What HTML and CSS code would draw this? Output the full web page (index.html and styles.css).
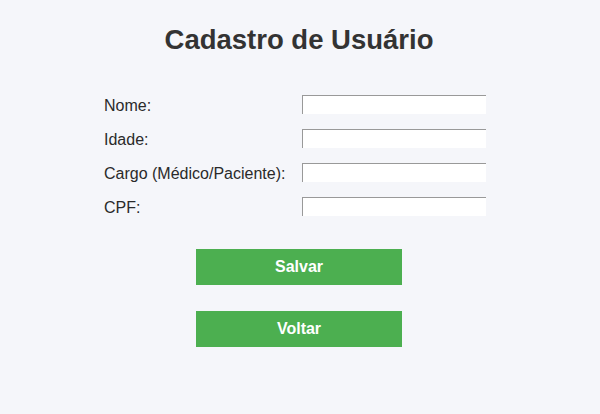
FILE: index.html
```html
<!DOCTYPE html>
<html lang="pt">
<head>
<meta charset="utf-8">
<title>Cadastro de Usuário</title>
<link rel="stylesheet" href="styles.css">
</head>
<body>
<main class="page">
  <h1 class="title">Cadastro de Usuário</h1>
  <form class="form">
    <div class="fields">
      <label class="label" for="nome">Nome:</label>
      <input class="input" id="nome" type="text">
      <label class="label" for="idade">Idade:</label>
      <input class="input" id="idade" type="text">
      <label class="label" for="cargo">Cargo (Médico/Paciente):</label>
      <input class="input" id="cargo" type="text">
      <label class="label" for="cpf">CPF:</label>
      <input class="input" id="cpf" type="text">
    </div>
    <div class="actions">
      <button class="btn" type="button">Salvar</button>
      <button class="btn" type="button">Voltar</button>
    </div>
  </form>
</main>
</body>
</html>
```

FILE: styles.css
```css
html, body {
  margin: 0;
  padding: 0;
  background: #f5f6fa;
}
body {
  font-family: "Liberation Sans", Arial, sans-serif;
  color: #333;
}
.page {
  display: flex;
  flex-direction: column;
  align-items: center;
  padding-top: 24px;
  padding-right: 2px;
}
.title {
  margin: 0;
  font-size: 27.5px;
  font-weight: bold;
  color: #333;
  line-height: 32px;
}
.form {
  margin-top: 39px;
  display: flex;
  flex-direction: column;
  align-items: center;
}
.fields {
  display: grid;
  grid-template-columns: 198px 184px;
  row-gap: 12px;
  align-items: start;
  margin-right: 8px;
}
.label {
  font-size: 16px;
  color: #2a2a2a;
  line-height: 22px;
}
.input {
  box-sizing: border-box;
  width: 184px;
  height: 19px;
  margin: 0;
  padding: 0;
  background: #fff;
  border-style: solid;
  border-width: 1px 0 0 1px;
  border-color: #999;
}
.actions {
  margin-top: 30px;
  display: flex;
  flex-direction: column;
  gap: 26px;
}
.btn {
  width: 206px;
  height: 36px;
  border: none;
  background: #4caf50;
  color: #fff;
  font-family: "Liberation Sans", Arial, sans-serif;
  font-size: 16px;
  font-weight: bold;
  padding: 0;
}
```
